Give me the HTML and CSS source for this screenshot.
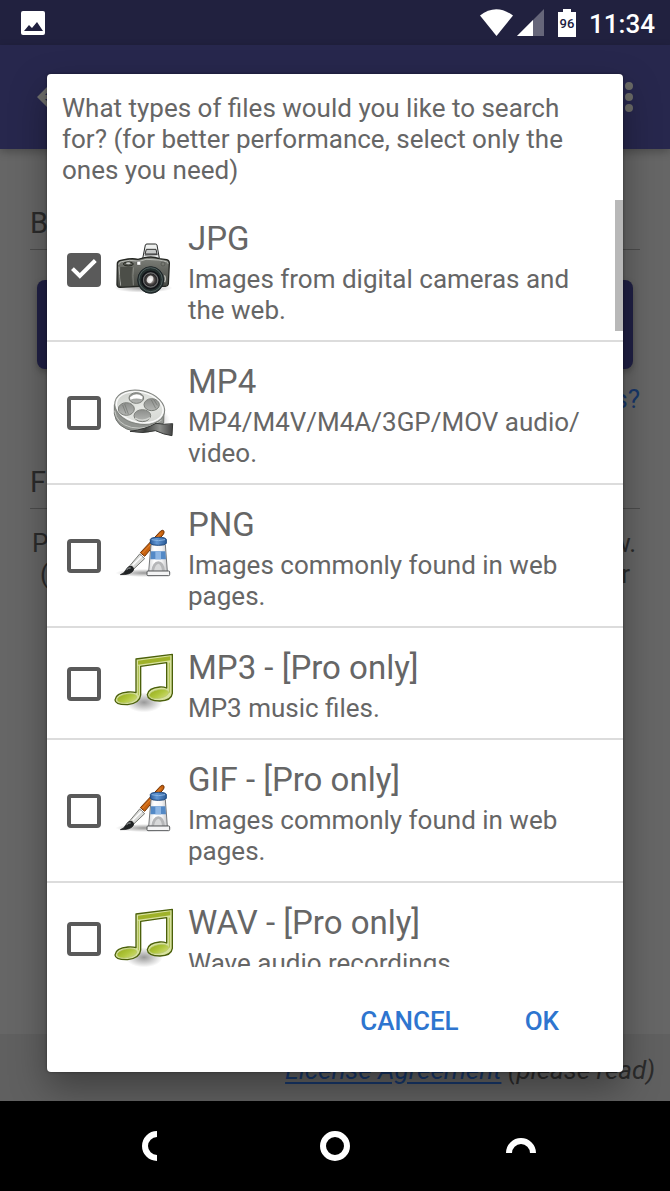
FILE: index.html
```html
<!DOCTYPE html>
<html lang="en">
<head>
<meta charset="utf-8">
<meta name="viewport" content="width=device-width, initial-scale=1">
<title>File types</title>
<link rel="stylesheet" href="styles.css">
</head>
<body>
<svg class="defs" aria-hidden="true">
  <defs>
    <linearGradient id="camBody" x1="0" x2="0" y1="0" y2="1"><stop offset="0" stop-color="#80827c"/><stop offset=".45" stop-color="#62645e"/><stop offset="1" stop-color="#464843"/></linearGradient>
    <radialGradient id="camLens"><stop offset="0" stop-color="#fff"/><stop offset=".3" stop-color="#a5a09d"/><stop offset=".6" stop-color="#4a4544"/><stop offset="1" stop-color="#181a1e"/></radialGradient>
    <radialGradient id="shade"><stop offset="0" stop-color="#000" stop-opacity=".4"/><stop offset="1" stop-color="#000" stop-opacity="0"/></radialGradient>
    <linearGradient id="reelTop" x1="0" y1="0" x2="1" y2="1"><stop offset="0" stop-color="#c6c9c4"/><stop offset=".5" stop-color="#e6e8e4"/><stop offset="1" stop-color="#cfd1cd"/></linearGradient>
    <linearGradient id="reelHole" x1="0" y1="0" x2="0" y2="1"><stop offset="0" stop-color="#8c8e8b"/><stop offset="1" stop-color="#b5b7b4"/></linearGradient>
    <linearGradient id="filmTail"><stop offset="0" stop-color="#999"/><stop offset=".35" stop-color="#3d3f3d"/><stop offset=".7" stop-color="#8c8e8b"/><stop offset="1" stop-color="#444"/></linearGradient>
    <linearGradient id="tube"><stop offset="0" stop-color="#d5d6d8"/><stop offset=".3" stop-color="#fff"/><stop offset=".7" stop-color="#f4f4f5"/><stop offset="1" stop-color="#c5c6c8"/></linearGradient>
    <linearGradient id="cap"><stop offset="0" stop-color="#2d5d9c"/><stop offset=".4" stop-color="#6297d4"/><stop offset="1" stop-color="#2b5b98"/></linearGradient>
    <linearGradient id="note" x1="0" y1="0" x2="1" y2="1"><stop offset="0" stop-color="#98ad20"/><stop offset=".5" stop-color="#afc63b"/><stop offset="1" stop-color="#d0dc78"/></linearGradient>
  </defs>
  <symbol id="camera" viewBox="189 63 180 180">
    <ellipse cx="280" cy="207" rx="88" ry="14" fill="url(#shade)"/>
    <path d="M278 119 286 78q1-3 5-3h25q4 0 5 3l7 40Z" fill="#eef0ef" stroke="#282a29" stroke-width="3"/>
    <path d="M289 91h29l3 14h-36Z" fill="#c6c8c7" stroke="#333" stroke-width="3"/>
    <path d="m284 108 39-1" stroke="#333" stroke-width="3"/>
    <path d="M202 134q0-8 10-10l22-4q17-2 30 1l20-5q25-5 43 3l23 3q8 2 8 11l-3 62q-1 6-9 7l-57-1-79 4q-8-1-9-8Z" fill="url(#camBody)" stroke="#242622" stroke-width="4"/>
    <path d="M206 137q1-8 9-9l24-4 29 3 20-6 39 2 22 5q5 1 5 6" fill="none" stroke="#b9bbb6" stroke-width="3"/>
    <path d="M207 143q2 25 5 57" fill="none" stroke="#a5a7a2" stroke-width="3"/>
    <path d="M211 144h37q-6 17-2 57l-30 1q-8-23-5-58Z" fill="#4c4e48"/>
    <path d="M251 145q-4 22-1 54" fill="none" stroke="#858780" stroke-width="3"/>
    <ellipse cx="235" cy="135" rx="15" ry="6" fill="#555751" stroke="#252720" stroke-width="3"/>
    <ellipse cx="235" cy="133" rx="7" ry="3" fill="#c9cbc7"/>
    <rect x="261" y="127" width="11" height="11" fill="#fff" stroke="#444"/>
    <circle cx="339" cy="135" r="6" fill="#777972" stroke="#4b4d48" stroke-width="2"/>
    <ellipse cx="302" cy="183" rx="39" ry="40" fill="#25302f" stroke="#1d2427" stroke-width="3"/>
    <ellipse cx="302" cy="182" rx="35" ry="36" fill="none" stroke="#52605f" stroke-width="3"/>
    <circle cx="302" cy="183" r="26" fill="#5a5a5a" stroke="#101317" stroke-width="5"/>
    <circle cx="302" cy="183" r="21" fill="url(#camLens)" stroke="#8c8c8c" stroke-width="2"/>
    <ellipse cx="300" cy="181" rx="9" ry="12" fill="#fff" opacity=".75" transform="rotate(25 300 181)"/>
    <path d="M343 169q6 8 1 21" fill="none" stroke="#b4b6b1" stroke-width="4"/>
  </symbol>
  <symbol id="reel" viewBox="189 40 180 180">
    <ellipse cx="293" cy="151" rx="67" ry="40" fill="url(#shade)"/>
    <path d="M193 105v27q5 42 61 53 37 5 67-10l20-15 1-44Z" fill="#929591" stroke="#717470" stroke-width="3"/>
    <path d="M194 123q5 39 50 50 47 10 91-22" fill="none" stroke="#c8cac6" stroke-width="3"/>
    <path d="M240 185q47-6 78-24 25 5 50 1l-2 36q-24-3-50-15-36 10-76 2Z" fill="url(#filmTail)" stroke="#353735" stroke-width="3"/>
    <ellipse cx="269" cy="113" rx="76" ry="50" transform="rotate(13 269 113)" fill="url(#reelTop)" stroke="#80837f" stroke-width="3"/>
    <ellipse cx="269" cy="113" rx="71" ry="45" transform="rotate(13 269 113)" fill="none" stroke="#fafafa" stroke-width="4"/>
    <g fill="url(#reelHole)" stroke="#7b7e79" stroke-width="3">
      <ellipse cx="259" cy="85" rx="22" ry="16"/>
      <ellipse cx="305" cy="105" rx="23" ry="18"/>
      <ellipse cx="229" cy="118" rx="24" ry="19"/>
      <ellipse cx="277" cy="138" rx="25" ry="18"/>
    </g>
    <path d="M240 83q18-17 38-2l-2 8q-18-6-35 1Z" fill="#fff"/>
    <path d="m218 106 10 26m-4-29 11 30m69-42 13 25m-6-27 11 18" stroke="#6e716d" stroke-width="2"/>
    <path d="M255 145q22 13 46-1" fill="none" stroke="#d3d5d1" stroke-width="4"/>
  </symbol>
  <symbol id="paint" viewBox="189 50 180 180">
    <ellipse cx="282" cy="191" rx="86" ry="12" fill="url(#shade)"/>
    <path d="m271 130 61-65q8-5 10 1 1 5-2 9l-56 66Z" fill="#c8620f" stroke="#6f3204" stroke-width="3"/>
    <path d="m277 132 56-60" stroke="#f09a45" stroke-width="2"/>
    <path d="m269 134 15 14-34 32-13-8Z" fill="#d9dad8" stroke="#777975" stroke-width="3"/>
    <path d="m248 168 27-27" stroke="#fff" stroke-width="4"/>
    <path d="M211 196q12-4 17-15 6-13 18-10 9 7 3 14-9 12-38 11Z" fill="#202324" stroke="#101213" stroke-width="2"/>
    <path d="M230 181q6-7 12-5" fill="none" stroke="#b1b4b4" stroke-width="3"/>
    <path d="M303 106h43l6 80h-56Z" fill="url(#tube)" stroke="#77797b" stroke-width="3"/>
    <path d="M303 126h43l2 24h-47Z" fill="#5389c6"/>
    <path d="M316 126h17v24h-17Z" fill="#8db6e4"/>
    <path d="M304 185q3-27 21-29 18 2 20 29Z" fill="#b5b6b8"/>
    <path d="M312 184q4-19 13-21 9 3 11 21Z" fill="#d8d9da"/>
    <path d="M301 90q2-6 24-6 22 0 24 6v12q-4 6-24 6-20 0-24-6Z" fill="url(#cap)" stroke="#214c82" stroke-width="3"/>
    <path d="M305 91q20 6 40 0" fill="none" stroke="#8ab6e4" stroke-width="3"/>
    <rect x="291" y="185" width="68" height="14" rx="3" fill="#f4f4f5" stroke="#555759" stroke-width="3"/>
  </symbol>
  <symbol id="music" viewBox="189 42 180 180">
    <ellipse cx="282" cy="187" rx="56" ry="30" fill="url(#shade)"/>
    <path d="M258 57 367 43V160q-3 22-37 23-37-1-38-19 3-20 37-23 11-1 21 3V68l-78 11v86q-2 24-39 29-37 1-38-14 2-21 39-24 14-1 24 2Z" fill="#d8e29e" stroke="#4b600a" stroke-width="4" stroke-linejoin="round"/>
    <path d="m264 62 97-13v12l-97 13Z" fill="#9fb229"/>
    <ellipse cx="231" cy="175" rx="30" ry="13" transform="rotate(-10 231 175)" fill="url(#note)" stroke="#b5c568" stroke-width="2"/>
    <ellipse cx="327" cy="162" rx="29" ry="13" transform="rotate(-10 327 162)" fill="url(#note)" stroke="#b5c568" stroke-width="2"/>
    <path d="M265 77v89m93-98v90" stroke="#a9bc48" stroke-width="3"/>
  </symbol>
</svg>

<div class="device">
  <header class="status">
    <svg class="status-photo" viewBox="0 0 26 26" aria-label="Picture notification"><rect x="1" y="1" width="24" height="24" rx="2" fill="#fff"/><path d="m4 21 5-6 3 3 5-6 6 9Z" fill="#20203f"/></svg>
    <div class="status-right">
      <svg class="wifi" viewBox="0 0 34 28" aria-label="Wi-Fi"><path d="M0 6.500Q16-6 33 6.500L16.500 27Z" fill="#fff"/></svg>
      <svg class="signal" viewBox="0 0 27 28" aria-label="Signal"><path d="M27 0V27H0Z" fill="#66667a"/><path d="M16 11V27H0Z" fill="#fff"/></svg>
      <svg class="battery" viewBox="0 0 18 28" role="img" aria-label="Battery 96"><path d="M0 3h5V0h8v3h5v25H0Z" fill="#fff"/><text x="9" y="19">96</text></svg>
      <span class="clock">11:34</span>
    </div>
  </header>

  <div class="screen">
    <div class="toolbar">
      <svg class="back" viewBox="0 0 26 26" aria-hidden="true"><path d="M0 13 13 0l3 3-8 8h18v4H8l8 8-3 3Z" fill="#6f6f6c"/></svg>
      <svg class="more" viewBox="0 0 8 30" aria-hidden="true"><g fill="#6b6b67"><circle cx="4" cy="4" r="4"/><circle cx="4" cy="15" r="4"/><circle cx="4" cy="26" r="4"/></g></svg>
    </div>
    <main class="page">
      <h2>B</h2>
      <div class="page-button"></div>
      <a class="page-link" href="#">s?</a>
      <h2>F</h2>
      <div class="page-text"><span>P</span><span>w.</span></div>
      <div class="page-text inner"><span>(</span><span>r</span></div>
    </main>
    <footer class="license"><a href="#">License Agreement</a> (please read)</footer>
  </div>

  <nav class="navbar">
    <button type="button" aria-label="Back"><svg viewBox="0 0 30 30"><path d="M23 3a12 12 0 0 0 0 24"/></svg></button>
    <button type="button" aria-label="Home"><svg viewBox="0 0 30 30"><circle cx="15" cy="15" r="12"/></svg></button>
    <button type="button" aria-label="Recents"><svg viewBox="0 0 30 30"><path d="M3 22a12 12 0 0 1 24 0"/></svg></button>
  </nav>

  <form class="dialog" role="dialog" aria-labelledby="question">
    <h1 id="question">What types of files would you like to search for? (for better performance, select only the ones you need)</h1>
    <div class="list-wrap">
      <div class="list">
        <label class="row"><input type="checkbox" checked><svg class="icon"><use href="#camera"/></svg><span class="copy"><span class="name">JPG</span><span class="desc">Images from digital cameras and the web.</span></span></label>
        <label class="row"><input type="checkbox"><svg class="icon"><use href="#reel"/></svg><span class="copy"><span class="name">MP4</span><span class="desc">MP4/M4V/M4A/3GP/MOV audio/<wbr>video.</span></span></label>
        <label class="row"><input type="checkbox"><svg class="icon"><use href="#paint"/></svg><span class="copy"><span class="name">PNG</span><span class="desc">Images commonly found in web pages.</span></span></label>
        <label class="row"><input type="checkbox"><svg class="icon"><use href="#music"/></svg><span class="copy"><span class="name">MP3 - [Pro only]</span><span class="desc">MP3 music files.</span></span></label>
        <label class="row"><input type="checkbox"><svg class="icon"><use href="#paint"/></svg><span class="copy"><span class="name">GIF - [Pro only]</span><span class="desc">Images commonly found in web pages.</span></span></label>
        <label class="row"><input type="checkbox"><svg class="icon"><use href="#music"/></svg><span class="copy"><span class="name">WAV - [Pro only]</span><span class="desc">Wave audio recordings.</span></span></label>
      </div>
      <div class="thumb"></div>
    </div>
    <div class="actions"><button type="button">CANCEL</button><button type="button">OK</button></div>
  </form>
</div>
</body>
</html>
```
FILE: styles.css
```css
* { box-sizing: border-box; }
body { margin: 0; background: #000; font-family: Roboto, "Liberation Sans", sans-serif; }
button { border: 0; padding: 0; background: none; font: inherit; cursor: pointer; }
svg { display: block; }
.defs { position: absolute; width: 0; height: 0; }

.device { position: relative; display: flex; flex-direction: column; height: 100vh; overflow: hidden; }

.status { flex: none; height: 45px; display: flex; align-items: center; justify-content: space-between; padding: 0 15px 0 20px; background: #21213f; color: #fff; }
.status-photo { width: 26px; height: 26px; }
.status-right { display: flex; align-items: center; }
.wifi { width: 34px; height: 28px; margin-right: 3px; }
.signal { width: 27px; height: 28px; margin-right: 14px; }
.battery { width: 18px; height: 28px; margin-right: 13px; }
.battery text { font-size: 13px; font-weight: 500; text-anchor: middle; fill: #20203f; }
.clock { padding-top: 2px; font-size: 26px; line-height: 32px; font-weight: 500; }

.screen { flex: 1; min-height: 0; display: flex; flex-direction: column; background: #666; color: #2b2b2b; }
.toolbar { flex: none; height: 104px; display: flex; align-items: center; justify-content: space-between; padding: 0 37px; background: #27274d; box-shadow: 0 3px 8px rgba(0, 0, 0, .25); }
.back { width: 26px; height: 26px; }
.more { width: 8px; height: 30px; }
.page { flex: 1; min-height: 0; padding: 57px 30px 0; font-size: 26px; line-height: 31px; }
.page h2 { margin: 0; padding: 0 0 9px; font-size: 29px; line-height: 34px; font-weight: 400; border-bottom: 1px solid #4c4c4c; }
.page-button { height: 89px; margin: 30px 7px 15px; border-radius: 8px; background: #202045; box-shadow: 0 3px 6px rgba(0, 0, 0, .25); }
.page-link { display: block; margin-bottom: 50px; text-align: right; text-decoration: none; color: #17376a; }
.page-text { display: flex; justify-content: space-between; padding: 0 4px 0 2px; }
.page h2 + .page-text { padding-top: 19px; }
.page-text.inner { padding: 0 10px; }
.license { flex: none; height: 67px; padding: 21px 15px 0 0; background: #606060; font-size: 26px; line-height: 31px; font-style: italic; text-align: right; white-space: nowrap; }
.license a { color: #17376a; text-underline-offset: 3px; }

.navbar { flex: none; height: 90px; display: flex; align-items: center; justify-content: center; gap: 156px; background: #000; }
.navbar button, .navbar svg { width: 30px; height: 30px; }
.navbar svg { fill: none; stroke: #fff; stroke-width: 6; }

/* The dialog floats over the dimmed screen. */
.dialog { position: absolute; inset: 74px 47px 119px; display: flex; flex-direction: column; background: #fff; border-radius: 4px; color: #666; box-shadow: 0 16px 36px rgba(0, 0, 0, .35), 0 0 3px rgba(0, 0, 0, .4); }
.dialog h1 { margin: 0; padding: 19px 40px 13px 15px; font-size: 26px; line-height: 31px; font-weight: 400; }
.list-wrap { position: relative; flex: 1; min-height: 0; }
.list { height: 100%; overflow-y: auto; scrollbar-width: none; }
.thumb { position: absolute; top: 1px; right: 0; width: 8px; height: 131px; background: #b8b8b8; }
.row { display: flex; align-items: center; padding: 15px 24px 14px 20px; border-bottom: 2px solid #dcdcdc; }
.row input { appearance: none; flex: none; display: grid; width: 34px; height: 34px; margin: 0 12px 0 0; border: 4px solid #5a5a5a; border-radius: 4px; }
.row input:checked { background: #5a5a5a; }
.row input:checked::before { content: ""; width: 26px; height: 26px; background: #fff; clip-path: polygon(0 50%, 11% 39%, 34% 62%, 88% 8%, 99% 19%, 34% 84%); }
.icon { flex: none; width: 60px; height: 60px; margin-right: 15px; }
.icon, symbol { overflow: visible; }
.name, .desc { display: block; }
.name { font-size: 33px; line-height: 50px; }
.desc { font-size: 26px; line-height: 31px; }
.actions { flex: none; display: flex; justify-content: flex-end; gap: 66px; height: 105px; padding: 2px 64px 0 0; align-items: center; font-size: 26px; font-weight: 500; color: #2e75cf; }
.actions button { color: inherit; }
```
